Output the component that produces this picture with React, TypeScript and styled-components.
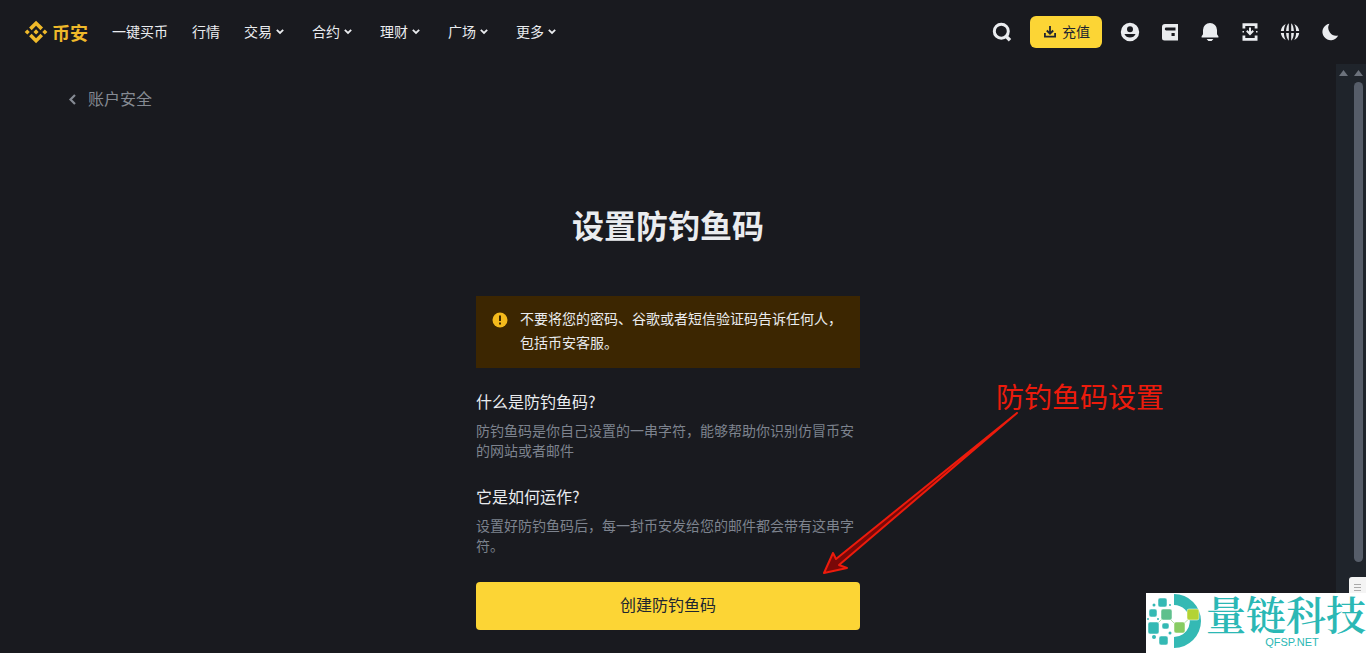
import React from "react";
import styled, { createGlobalStyle } from "styled-components";

const GlobalStyle = createGlobalStyle`
  *, *::before, *::after { box-sizing: border-box; }
  body {
    margin: 0;
    background: #191a1f;
    color: #eaecef;
    font-family: "Noto Sans CJK SC", "Liberation Sans", sans-serif;
    font-size: 14px;
    line-height: 20px;
  }
  h1, h2, p { margin: 0; }
  button { font-family: inherit; cursor: pointer; }
  svg { display: block; flex: none; }
`;

const Page = styled.div`
  position: relative;
  display: flex;
  flex-direction: column;
  min-height: 100vh;
  overflow: hidden;
`;

const Header = styled.header`
  display: flex;
  align-items: center;
  justify-content: space-between;
  height: 64px;
  padding: 0 24px;
`;

const HeaderGroup = styled.div<{ $gap: number }>`
  display: flex;
  align-items: center;
  gap: ${({ $gap }) => $gap}px;
`;

const Brand = styled.a`
  display: flex;
  align-items: center;
  gap: 4px;
  color: #efb92a;
  font-size: 18px;
  line-height: 24px;
  font-weight: 700;
  text-decoration: none;
`;

const Nav = styled.nav`
  display: flex;
  align-items: center;
  gap: 24px;
  padding-bottom: 2px;
`;

const NavLink = styled.a`
  color: #eaecef;
  text-decoration: none;
`;

const NavMenu = styled.button`
  display: flex;
  align-items: center;
  gap: 4px;
  padding: 0 4px 0 0;
  border: 0;
  background: none;
  color: #eaecef;
  font-size: 14px;
  line-height: 20px;
`;

const IconButton = styled.button`
  width: 24px;
  height: 24px;
  padding: 0;
  border: 0;
  background: none;
  color: #eaecef;
`;

const DepositButton = styled.button`
  display: flex;
  align-items: center;
  justify-content: center;
  gap: 4px;
  height: 32px;
  padding: 0 12px 2px;
  border: 0;
  border-radius: 6px;
  background: #fcd535;
  color: #202630;
  font-size: 14px;
  line-height: 20px;
`;

const Body = styled.div`
  display: flex;
  flex: 1;
`;

const Main = styled.main`
  flex: 1;
  min-width: 0;
  padding: 22px 64px;
`;

const BackLink = styled.a`
  display: flex;
  align-items: center;
  gap: 8px;
  width: max-content;
  color: #858a93;
  font-size: 16px;
  line-height: 24px;
  text-decoration: none;
`;

const Panel = styled.section`
  position: relative;
  width: 100%;
  max-width: 384px;
  margin: 94px auto 0;
`;

const Title = styled.h1`
  margin-bottom: 52px;
  font-size: 32px;
  line-height: 40px;
  font-weight: 700;
  text-align: center;
`;

const Alert = styled.div`
  display: flex;
  gap: 12px;
  margin-bottom: 21px;
  padding: 10px 16px 14px;
  background: #3c2601;
  line-height: 24px;
`;

const AlertIcon = styled.span`
  display: flex;
  align-items: center;
  height: 28px;
`;

const Topic = styled.section`
  margin-bottom: 24px;
`;

const TopicTitle = styled.h2`
  margin-bottom: 7px;
  font-size: 16px;
  line-height: 24px;
  font-weight: 400;
`;

const TopicText = styled.p`
  color: #7d838e;
`;

const CreateButton = styled.button`
  display: block;
  width: 100%;
  height: 48px;
  margin-top: 27px;
  padding: 0 16px 4px;
  border: 0;
  border-radius: 4px;
  background: #fcd535;
  color: #202630;
  font-size: 16px;
  line-height: 24px;
`;

const Note = styled.div`
  position: absolute;
  top: 172px;
  left: 344px;
  width: 344px;
  color: #ec1b0c;
  pointer-events: none;
`;

const NoteText = styled.p`
  font-size: 28px;
  line-height: 40px;
  text-align: right;
`;

const NoteArrow = styled.svg`
  overflow: visible;
`;

const Scrollbars = styled.div`
  display: flex;
  background: #1f242b;
`;

const Track = styled.div`
  display: flex;
  flex-direction: column;
  align-items: center;
  gap: 6px;
  width: 15px;
  padding-top: 6px;
`;

const Thumb = styled.div`
  width: 9px;
  height: calc(100vh - 173px);
  border-radius: 5px;
  background: #565d69;
`;

const Handle = styled.div`
  position: absolute;
  right: 0;
  bottom: 56px;
  width: 17px;
  height: 20px;
  padding: 7px 0 0 5px;
  border-radius: 3px 0 0 0;
  background: #f4f4f4;
`;

const Watermark = styled.aside`
  position: absolute;
  right: 0;
  bottom: 0;
  display: flex;
  width: 220px;
  height: 60px;
  background: #fff;
  color: #2bb8b5;
`;

const WatermarkText = styled.div`
  flex: 1;
  text-align: center;
  white-space: nowrap;
`;

const WatermarkName = styled.p`
  font-family: "Noto Serif CJK SC", "Noto Sans CJK SC", serif;
  font-size: 40px;
  line-height: 39px;
  font-weight: 600;
`;

const WatermarkSite = styled.p`
  padding-left: 12px;
  font-family: "Liberation Sans", sans-serif;
  font-size: 11px;
  line-height: 20px;
`;

const Chevron = () => (
  <svg width="8" height="8" viewBox="0 0 8 8" fill="none" stroke="currentColor" strokeWidth="1.8">
    <path d="M.8 2.900 4 5.900l3.200-3" />
  </svg>
);

const Icon = ({ label, children }: { label: string; children: React.ReactNode }) => (
  <IconButton type="button" aria-label={label}>
    <svg width="24" height="24" viewBox="0 0 24 24" fill="currentColor">
      {children}
    </svg>
  </IconButton>
);

const UpArrow = () => (
  <svg width="9" height="6" viewBox="0 0 9 6" fill="#6c727c">
    <path d="M4.5 0 9 6H0z" />
  </svg>
);

const menus = ["交易", "合约", "理财", "广场", "更多"];

export default function App() {
  return (
    <Page>
      <GlobalStyle />
      <Header>
        <HeaderGroup $gap={24}>
          <Brand href="#">
            <svg width="24" height="24" viewBox="-4 0 134 127" fill="currentColor">
              <path d="M38.7 53.2l24.6-24.6 24.6 24.6 14.3-14.3L63.3 0 24.4 38.9zM0 63.3L14.3 49l14.3 14.3-14.3 14.3zM38.7 73.4L63.3 98l24.6-24.6 14.3 14.3-38.9 38.9-38.9-38.9zM98 63.3L112.3 49l14.3 14.3-14.3 14.3zM77.8 63.3L63.3 48.8 48.8 63.3l14.5 14.5z" />
            </svg>
            币安
          </Brand>
          <Nav>
            <NavLink href="#">一键买币</NavLink>
            <NavLink href="#">行情</NavLink>
            {menus.map((name) => (
              <NavMenu key={name} type="button">
                {name}
                <Chevron />
              </NavMenu>
            ))}
          </Nav>
        </HeaderGroup>
        <HeaderGroup $gap={16}>
          <Icon label="搜索">
            <circle cx="11.3" cy="11.2" r="7" fill="none" stroke="currentColor" strokeWidth="3" />
            <path d="M14.8 17.4l2.400-2.400 4 4-2.400 2.400z" />
          </Icon>
          <DepositButton type="button">
            <svg width="16" height="16" viewBox="0 0 16 16" fill="none" stroke="currentColor" strokeWidth="1.8">
              <path d="M8 3v7.500M4.800 7.500 8 10.700 11.200 7.500M2.900 10v3.600h10.200V10" />
            </svg>
            充值
          </DepositButton>
          <Icon label="账户">
            <path
              fillRule="evenodd"
              d="M12 2.8a9.2 9.2 0 1 1 0 18.4 9.2 9.2 0 0 1 0-18.4zM12 6.3a3 3 0 1 0 0 6 3 3 0 0 0 0-6zM6.4 14a6.2 6.2 0 0 0 11.2 0z"
            />
          </Icon>
          <Icon label="钱包">
            <path
              fillRule="evenodd"
              d="M7 4h13v16.500H6.500A2.500 2.500 0 0 1 4 18V7a3 3 0 0 1 3-3zM8.200 7.600a1.400 1.400 0 0 0 0 2.800H17.500V7.600zM13.500 13v3h3.200v-3z"
            />
          </Icon>
          <Icon label="通知">
            <path d="M12 3a7 7 0 0 1 7 7v4.2l1.4 2v1.3H3.6v-1.3l1.4-2V10a7 7 0 0 1 7-7zM8.6 19h6.8L13.6 21h-3.2z" />
          </Icon>
          <Icon label="下载">
            <path d="M4.500 3.200h15v5.400h-2.800V6H7.300v2.600H4.500zM4.500 15.400h2.800V18h9.400v-2.600h2.800v5.400h-15z" />
            <path d="M4.500 12.600V11H6v1.600zM18 12.600V11h1.500v1.600z" />
            <path d="M11 7.600h2v4l1.600-1.500 1.300 1.400L12 15.400l-3.900-3.900 1.300-1.400 1.600 1.500z" />
          </Icon>
          <Icon label="语言">
            <path d="M10.8 3.2v7.7H8.1c.2-3.5 1.1-6.2 2.7-7.7zM13.2 3.2v7.7h2.7c-.2-3.5-1.1-6.2-2.7-7.7zM10.8 20.8v-7.7H8.1c.2 3.5 1.1 6.2 2.7 7.7zM13.2 20.8v-7.7h2.7c-.2 3.5-1.1 6.2-2.7 7.7zM7.8 3.9c-1.2 1.9-1.8 4.3-1.9 7H2.8a9.3 9.3 0 0 1 5-7zM16.2 3.9c1.2 1.9 1.8 4.3 1.9 7h3.1a9.3 9.3 0 0 0-5-7zM7.8 20.1c-1.2-1.9-1.8-4.3-1.9-7H2.8a9.3 9.3 0 0 0 5 7zM16.2 20.1c1.2-1.9 1.8-4.3 1.9-7h3.1a9.3 9.3 0 0 1-5 7z" />
          </Icon>
          <Icon label="深色模式">
            <path d="M11.4 3.7a8.3 8.3 0 1 0 8.8 11.8A8 8 0 0 1 11.4 3.7z" />
          </Icon>
        </HeaderGroup>
      </Header>
      <Body>
        <Main>
          <BackLink href="#">
            <svg width="16" height="16" viewBox="0 0 16 16" fill="none" stroke="currentColor" strokeWidth="2.2">
              <path d="M11 5 6.500 9.500l4.500 4.500" />
            </svg>
            账户安全
          </BackLink>
          <Panel>
            <Title>设置防钓鱼码</Title>
            <Alert role="note">
              <AlertIcon>
                <svg width="16" height="16" viewBox="0 0 16 16">
                  <circle cx="8" cy="8" r="7.5" fill="#f3b91c" />
                  <path d="M7 3.500h2v5.500H7zM7 10.500h2v2H7z" fill="#3c2601" />
                </svg>
              </AlertIcon>
              <p>不要将您的密码、谷歌或者短信验证码告诉任何人，包括币安客服。</p>
            </Alert>
            <Topic>
              <TopicTitle>什么是防钓鱼码?</TopicTitle>
              <TopicText>防钓鱼码是你自己设置的一串字符，能够帮助你识别仿冒币安的网站或者邮件</TopicText>
            </Topic>
            <Topic>
              <TopicTitle>它是如何运作?</TopicTitle>
              <TopicText>设置好防钓鱼码后，每一封币安发给您的邮件都会带有这串字符。</TopicText>
            </Topic>
            <CreateButton type="button">创建防钓鱼码</CreateButton>
            <Note>
              <NoteText>防钓鱼码设置</NoteText>
              <NoteArrow width="200" height="160" viewBox="-2 0 200 160" fill="#7a0808" stroke="currentColor" strokeWidth="2">
                <path d="M195 -3 14 143 11 137 2 157 25 152 17 149z" strokeLinejoin="round" />
              </NoteArrow>
            </Note>
          </Panel>
        </Main>
        <Scrollbars aria-hidden="true">
          <Track>
            <UpArrow />
          </Track>
          <Track>
            <UpArrow />
            <Thumb />
          </Track>
        </Scrollbars>
      </Body>
      <Handle aria-hidden="true">
        <svg width="8" height="9" viewBox="0 0 8 9" stroke="#aaa">
          <path d="M0 .5h7M0 3.500h7M0 6.500h7" />
        </svg>
      </Handle>
      <Watermark>
        <svg width="60" height="60" viewBox="0 0 60 60" fill="#34b9b4">
          <path d="M28 1a27 27 0 0 1 0 54V44a16 16 0 0 0 11-27.500A16 16 0 0 0 28 12z" />
          <path d="M8 34 20 22 33 35 47 22" fill="none" stroke="#b9dfa8" />
          <g stroke="#fff" strokeWidth=".5">
            <rect x="12" y="5" width="9" height="9" rx="2" />
            <rect x="3" y="16" width="8" height="8" rx="2" />
            <rect x="2" y="29" width="11" height="12" rx="2" />
            <rect x="16" y="30" width="7" height="6" rx="2" />
            <rect x="13" y="43" width="9" height="9" rx="2" />
            <rect x="15" y="16" width="11" height="11" rx="2" fill="#5fc08d" />
            <rect x="28" y="29" width="11" height="11" rx="2" fill="#88cc62" />
            <rect x="41" y="16" width="12" height="11" rx="2" fill="#b3d335" />
          </g>
          <circle cx="8" cy="12" r="1.500" />
          <circle cx="24" cy="12" r="1" />
          <circle cx="2" cy="26" r="1" />
          <circle cx="12" cy="26" r="1" />
          <circle cx="24" cy="40" r="1.500" />
          <circle cx="8" cy="44" r="2" />
        </svg>
        <WatermarkText>
          <WatermarkName>量链科技</WatermarkName>
          <WatermarkSite>QFSP.NET</WatermarkSite>
        </WatermarkText>
      </Watermark>
    </Page>
  );
}
